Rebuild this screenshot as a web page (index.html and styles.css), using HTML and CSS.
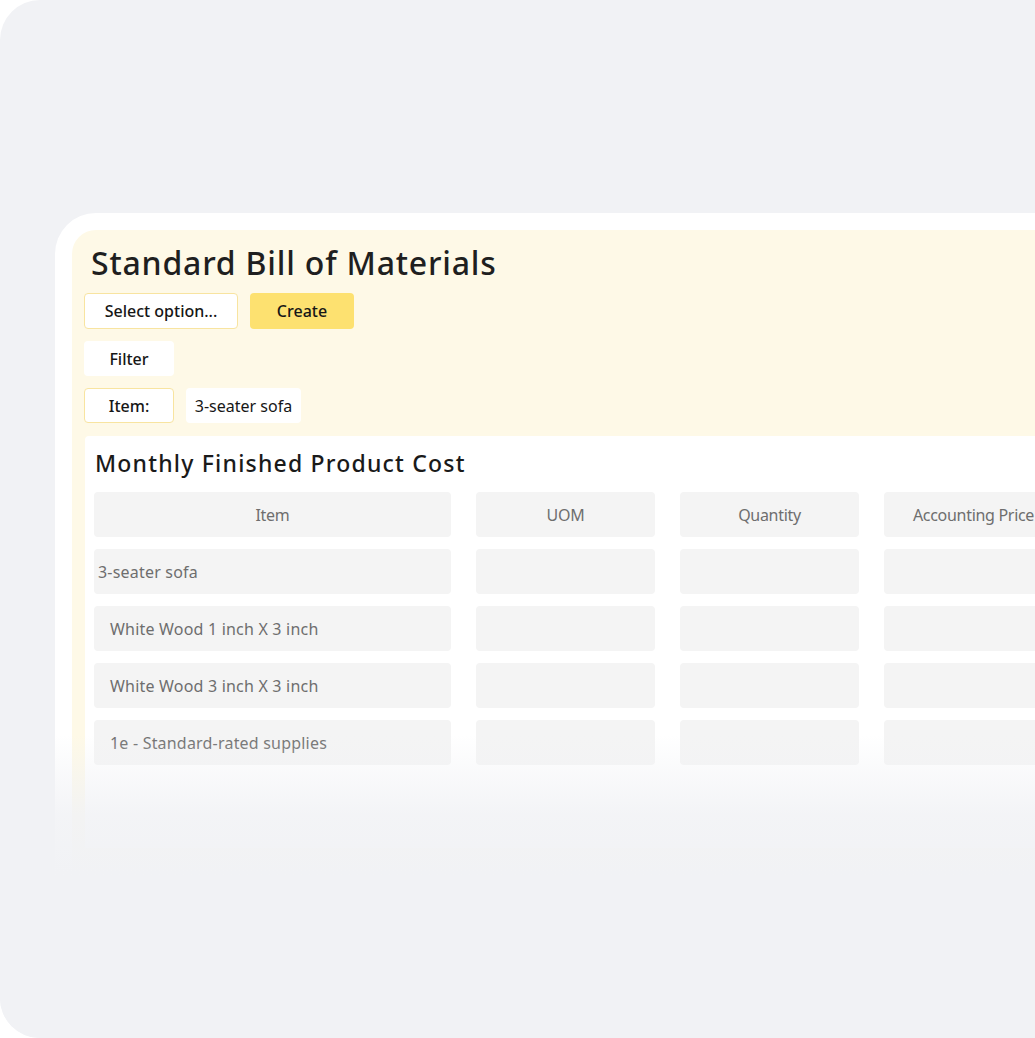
FILE: index.html
```html
<!DOCTYPE html>
<html lang="en">
<head>
    <meta charset="UTF-8">
    <meta name="viewport" content="width=device-width, initial-scale=1.0">
    <title>Standard Bill of Materials</title>
    <link rel="stylesheet" href="styles.css">
</head>
<body>
    <div class="canvas">
        <div class="frame">
            <div class="panel">
                <h1>Standard Bill of Materials</h1>
                <div class="toolbar">
                    <button class="select-button">Select option...</button>
                    <button class="create-button">Create</button>
                </div>
                <div class="toolbar">
                    <span class="chip">Filter</span>
                </div>
                <div class="toolbar">
                    <span class="chip chip-outline">Item:</span>
                    <span class="chip chip-value">3-seater sofa</span>
                </div>
                <div class="report">
                    <h2>Monthly Finished Product Cost</h2>
                    <div class="cost-table">
                        <div class="cell head">Item</div>
                        <div class="cell head">UOM</div>
                        <div class="cell head">Quantity</div>
                        <div class="cell head">Accounting Price</div>

                        <div class="cell first">3-seater sofa</div>
                        <div class="cell"></div>
                        <div class="cell"></div>
                        <div class="cell"></div>

                        <div class="cell">White Wood 1 inch X 3 inch</div>
                        <div class="cell"></div>
                        <div class="cell"></div>
                        <div class="cell"></div>

                        <div class="cell">White Wood 3 inch X 3 inch</div>
                        <div class="cell"></div>
                        <div class="cell"></div>
                        <div class="cell"></div>

                        <div class="cell">1e - Standard-rated supplies</div>
                        <div class="cell"></div>
                        <div class="cell"></div>
                        <div class="cell"></div>
                    </div>
                </div>
            </div>
        </div>
        <div class="fade"></div>
    </div>
</body>
</html>
```

FILE: styles.css
```css
body, html {
    margin: 0;
    background: #ffffff;
    font-family: "Noto Sans", Arial, sans-serif;
}
.canvas {
    position: relative;
    width: 1035px;
    height: 1038px;
    background-color: #f1f2f5;
    border-radius: 40px 0 0 40px;
    overflow: hidden;
}
.frame {
    box-sizing: border-box;
    width: 1100px;
    margin-left: 55px;
    padding-top: 213px;
}
.panel {
    background-color: #fef9e7;
    border-radius: 24px 0 0 0;
    padding: 8px 0 0 12px;
    height: 700px;
    box-shadow: 0 0 0 17px #ffffff;
    margin-left: 17px;
    margin-top: 17px;
}
h1 {
    margin: 0 0 0 7px;
    font-size: 32px;
    line-height: 50px;
    font-weight: 500;
    letter-spacing: 0.8px;
    color: #1f1f1f;
}
.toolbar {
    display: flex;
    gap: 12px;
    margin-top: 12px;
}
.toolbar:first-of-type {
    margin-top: 5px;
}
.select-button, .create-button, .chip {
    box-sizing: border-box;
    height: 36px;
    padding: 0;
    border-radius: 4px;
    font-family: "Noto Sans", Arial, sans-serif;
    font-size: 16px;
    font-weight: 500;
    color: #161616;
    display: flex;
    align-items: center;
    justify-content: center;
}
.select-button {
    width: 154px;
    background-color: #ffffff;
    border: 1px solid #f8e4a0;
}
.create-button {
    width: 104px;
    background-color: #fde170;
    border: none;
}
.chip {
    width: 90px;
    height: 35px;
    background-color: #ffffff;
}
.chip-outline {
    border: 1px solid #f8e4a0;
}
.chip-value {
    width: 115px;
    font-weight: 400;
}
.report {
    margin: 13px 0 0 1px;
    background-color: #ffffff;
    border-radius: 4px 0 0 0;
    padding: 12px 0 0 9px;
    height: 400px;
}
h2 {
    margin: 0 0 0 1px;
    font-size: 23px;
    line-height: 30px;
    font-weight: 500;
    letter-spacing: 1.2px;
    color: #1a1a1a;
}
.cost-table {
    display: grid;
    grid-template-columns: 357px 179px 179px 179px;
    grid-auto-rows: 45px;
    gap: 12px 25px;
    margin-top: 14px;
}
.cell {
    background-color: #f4f4f4;
    border-radius: 4px;
    display: flex;
    align-items: center;
    padding-left: 16px;
    font-size: 16px;
    letter-spacing: 0.2px;
    color: #6e6e6e;
    white-space: nowrap;
}
.cell.head {
    justify-content: center;
    padding-left: 0;
    letter-spacing: -0.3px;
}
.cell.first {
    padding-left: 4px;
}
.fade {
    position: absolute;
    left: 0;
    right: 0;
    top: 735px;
    bottom: 0;
    background: linear-gradient(to bottom, rgba(241, 242, 245, 0) 0px, rgba(241, 242, 245, 0.85) 80px, #f1f2f5 140px);
}
```
